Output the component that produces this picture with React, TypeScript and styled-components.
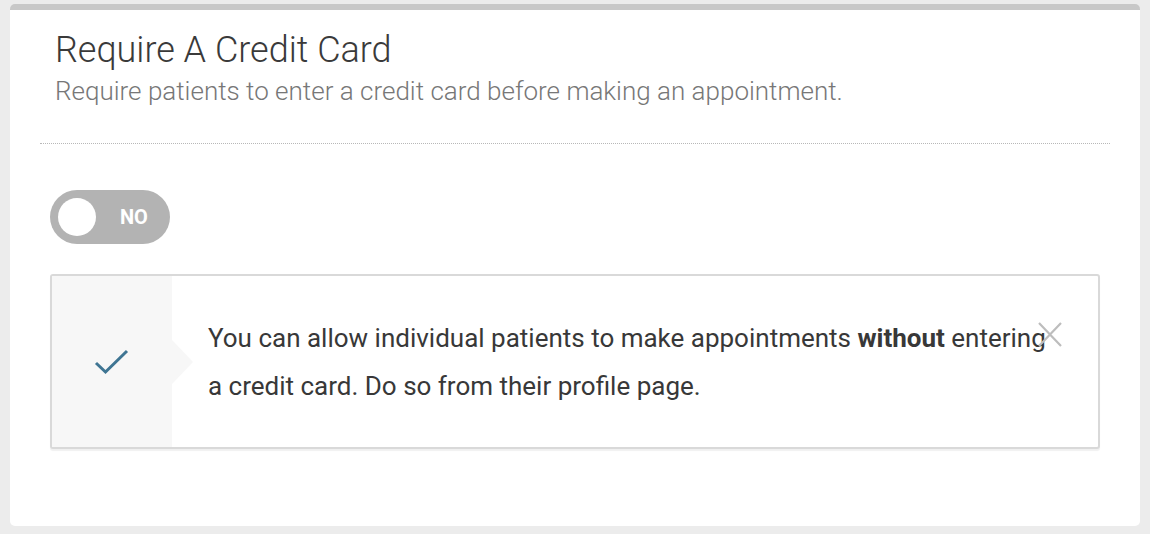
import React from "react";
import styled, { createGlobalStyle } from "styled-components";

const Global = createGlobalStyle`
  html, body { margin: 0; padding: 0; background: #ececec; }
  body { font-family: Roboto, "Noto Sans", sans-serif; }
  * { box-sizing: border-box; }
`;

const Page = styled.div`
  width: 1150px;
  height: 534px;
  padding: 4px 10px 8px 10px;
  background: #ececec;
`;

const Card = styled.section`
  background: #fff;
  border-top: 6px solid #c8c8c8;
  border-radius: 5px;
  height: 522px;
  padding: 20px 30px 0 30px;
`;

const Header = styled.header`
  padding: 0 0 0 15px;
`;

const Title = styled.h2`
  margin: 0;
  font-family: Roboto, sans-serif;
  font-weight: 300;
  font-size: 36px;
  line-height: 40px;
  color: #3a3a3a;
`;

const Subtitle = styled.p`
  margin: 0;
  font-family: Roboto, sans-serif;
  font-weight: 300;
  font-size: 26px;
  line-height: 42px;
  color: #777;
`;

const Divider = styled.hr`
  margin: 31px 0 0 0;
  border: none;
  border-top: 1px dotted #b8b8b8;
  height: 0;
`;

const Body = styled.div`
  padding: 46px 10px 0 10px;
  display: flex;
  flex-direction: column;
  gap: 30px;
`;

const Toggle = styled.button`
  width: 120px;
  height: 54px;
  border-radius: 27px;
  background: #b3b3b3;
  border: none;
  padding: 0 0 0 8px;
  display: flex;
  align-items: center;
  gap: 24px;
  cursor: pointer;
`;

const Knob = styled.span`
  width: 38px;
  height: 38px;
  border-radius: 50%;
  background: #fff;
`;

const ToggleLabel = styled.span`
  font-family: Roboto, sans-serif;
  font-weight: 700;
  font-size: 20px;
  color: #fff;
`;

const Alert = styled.div`
  position: relative;
  display: flex;
  width: 1050px;
  height: 175px;
  border: 2px solid #d9d9d9;
  border-radius: 3px;
  box-shadow: 0 2px 1px rgba(0, 0, 0, 0.06);
  background: #fff;
`;

const IconPanel = styled.div`
  position: relative;
  width: 120px;
  flex: none;
  background: #f7f7f7;
  display: flex;
  align-items: center;
  justify-content: center;
  padding-top: 2px;
  &::after {
    content: "";
    position: absolute;
    right: -21px;
    top: 64px;
    border-top: 22px solid transparent;
    border-bottom: 22px solid transparent;
    border-left: 21px solid #f7f7f7;
  }
`;

const Message = styled.p`
  margin: 0;
  padding: 38px 46px 0 36px;
  font-family: Roboto, sans-serif;
  font-size: 26px;
  line-height: 48px;
  color: #383838;
  b { font-weight: 700; }
`;

const Close = styled.button`
  position: absolute;
  left: 985px;
  top: 45px;
  width: 26px;
  height: 26px;
  padding: 0;
  border: none;
  background: none;
  cursor: pointer;
`;

export default function App() {
  return (
    <>
      <Global />
      <Page>
        <Card>
          <Header>
            <Title>Require A Credit Card</Title>
            <Subtitle>Require patients to enter a credit card before making an appointment.</Subtitle>
          </Header>
          <Divider />
          <Body>
            <Toggle aria-pressed={false}>
              <Knob />
              <ToggleLabel>NO</ToggleLabel>
            </Toggle>
            <Alert>
              <IconPanel>
                <svg width="36" height="28" viewBox="0 0 36 28">
                  <path d="M2 14 L11.5 23 L33 2" fill="none" stroke="#3f7593" strokeWidth="3" />
                </svg>
              </IconPanel>
              <Message>
                You can allow individual patients to make appointments <b>without</b> entering a credit card. Do so from their profile page.
              </Message>
              <Close aria-label="Close">
                <svg width="26" height="26" viewBox="0 0 26 26">
                  <path d="M2 2 L24 25 M24 2 L2 25" stroke="#bdbdbd" strokeWidth="2.2" fill="none" />
                </svg>
              </Close>
            </Alert>
          </Body>
        </Card>
      </Page>
    </>
  );
}
